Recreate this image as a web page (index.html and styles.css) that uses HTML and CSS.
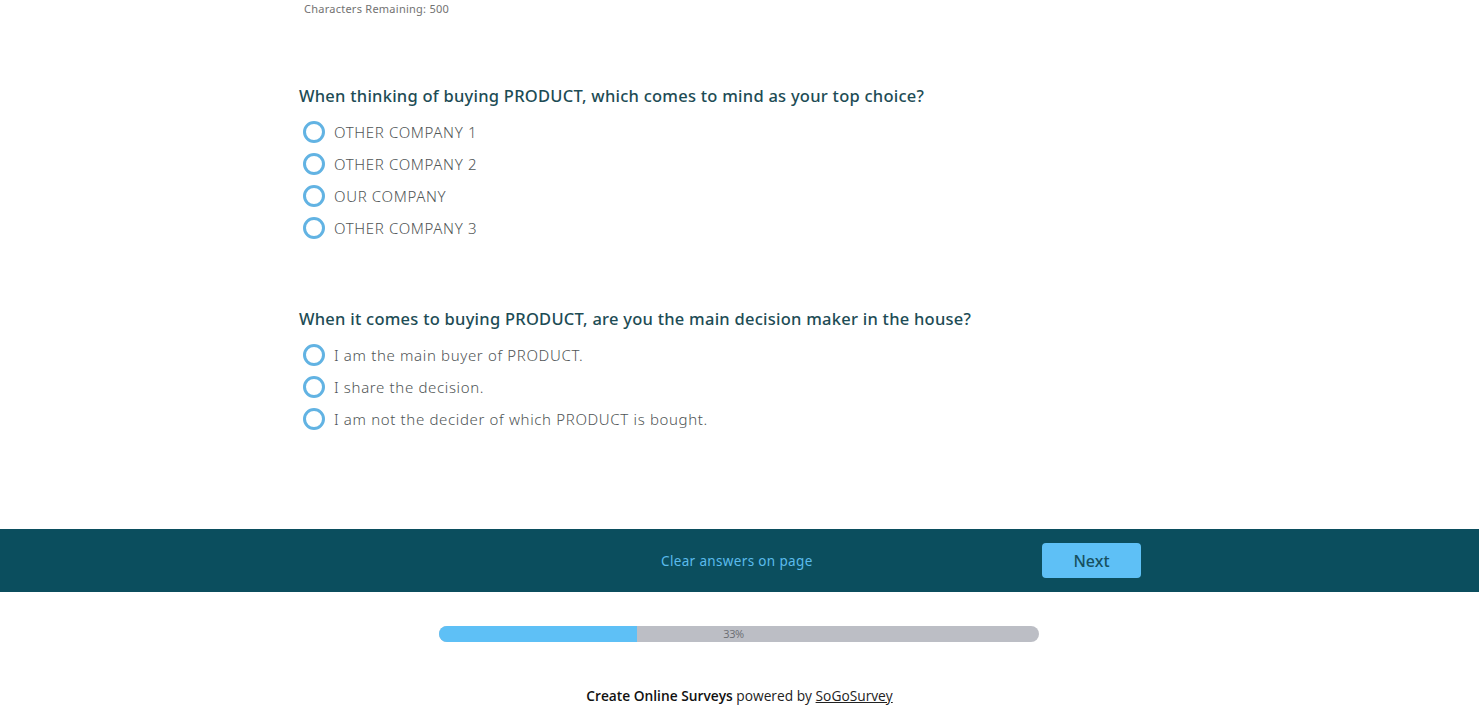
FILE: index.html
```html
<!DOCTYPE html>
<html lang="en">
<head>
<meta charset="utf-8">
<title>Survey</title>
<link rel="stylesheet" href="styles.css">
</head>
<body>
<main class="survey">
  <div class="chars">Characters Remaining: 500</div>

  <section class="question q1">
    <h2 class="q-title">When thinking of buying PRODUCT, which comes to mind as your top choice?</h2>
    <ul class="options">
      <li class="option"><span class="radio"></span><span class="label">OTHER COMPANY 1</span></li>
      <li class="option"><span class="radio"></span><span class="label">OTHER COMPANY 2</span></li>
      <li class="option"><span class="radio"></span><span class="label">OUR COMPANY</span></li>
      <li class="option"><span class="radio"></span><span class="label">OTHER COMPANY 3</span></li>
    </ul>
  </section>

  <section class="question q2">
    <h2 class="q-title">When it comes to buying PRODUCT, are you the main decision maker in the house?</h2>
    <ul class="options">
      <li class="option"><span class="radio"></span><span class="label">I am the main buyer of PRODUCT.</span></li>
      <li class="option"><span class="radio"></span><span class="label">I share the decision.</span></li>
      <li class="option"><span class="radio"></span><span class="label">I am not the decider of which PRODUCT is bought.</span></li>
    </ul>
  </section>
</main>

<nav class="navbar">
  <a class="clear" href="#">Clear answers on page</a>
  <button class="next" type="button">Next</button>
</nav>

<div class="progress-wrap">
  <div class="progress">
    <div class="progress-fill" style="width:33%"></div>
    <span class="progress-text">33%</span>
  </div>
</div>

<footer class="footer">
  <strong>Create Online Surveys</strong> powered by <a href="#">SoGoSurvey</a>
</footer>
</body>
</html>
```

FILE: styles.css
```css
* { box-sizing: border-box; }
html, body { margin: 0; padding: 0; }
body {
  background: #ffffff;
  font-family: "Noto Sans", "Open Sans", sans-serif;
  width: 1479px;
  height: 711px;
  overflow: hidden;
}

.survey {
  padding-left: 299px;
  height: 529px;
}

.chars {
  font-size: 11px;
  color: #727272;
  padding-left: 5px;
  line-height: 18px;
  letter-spacing: 0.25px;
}

.question { margin: 0; }
.q1 { padding-top: 69px; }
.q2 { padding-top: 66px; }

.q-title {
  margin: 0;
  font-size: 16.5px;
  font-weight: 500;
  color: #1d4c55;
  line-height: 18px;
  letter-spacing: 0.25px;
}

.options {
  list-style: none;
  margin: 11px 0 0 0;
  padding: 0;
}

.option {
  display: flex;
  align-items: center;
  height: 32px;
}

.radio {
  width: 22px;
  height: 22px;
  border: 3px solid #62b3e3;
  border-radius: 50%;
  margin-left: 4px;
  margin-right: 9px;
  flex: none;
}

.label {
  font-size: 15px;
  color: #505556;
  font-weight: 300;
  letter-spacing: 0.65px;
}

.navbar {
  height: 63px;
  background: #0b4e5e;
  display: flex;
  align-items: center;
  padding-left: 661px;
}

.clear {
  color: #5bbbec;
  text-decoration: none;
  font-size: 13.5px;
  letter-spacing: 0.35px;
}

.next {
  margin-left: auto;
  margin-right: 338px;
  width: 99px;
  height: 35px;
  background: #5ec0f6;
  border: none;
  border-radius: 4px;
  color: #17505f;
  font-family: "Noto Sans", "Open Sans", sans-serif;
  font-size: 16px;
  font-weight: 500;
  padding: 0;
}

.progress-wrap {
  display: flex;
  padding-top: 34px;
  padding-left: 439px;
}

.progress {
  position: relative;
  width: 600px;
  height: 16px;
  background: #bcbec5;
  border-radius: 8px;
  overflow: hidden;
}

.progress-fill {
  height: 100%;
  background: #5ec0f6;
}

.progress-text {
  position: absolute;
  left: 0;
  right: 11px;
  top: 0;
  text-align: center;
  font-family: "Open Sans", sans-serif;
  font-size: 11px;
  line-height: 16px;
  color: #6a6d72;
  letter-spacing: -0.4px;
}

.footer {
  text-align: center;
  font-family: "Open Sans", sans-serif;
  font-size: 13.75px;
  color: #222;
  padding-top: 44px;
  line-height: 20px;
}

.footer strong { font-weight: 600; color: #111; }
.footer a { color: #222; text-decoration: underline; }
```
